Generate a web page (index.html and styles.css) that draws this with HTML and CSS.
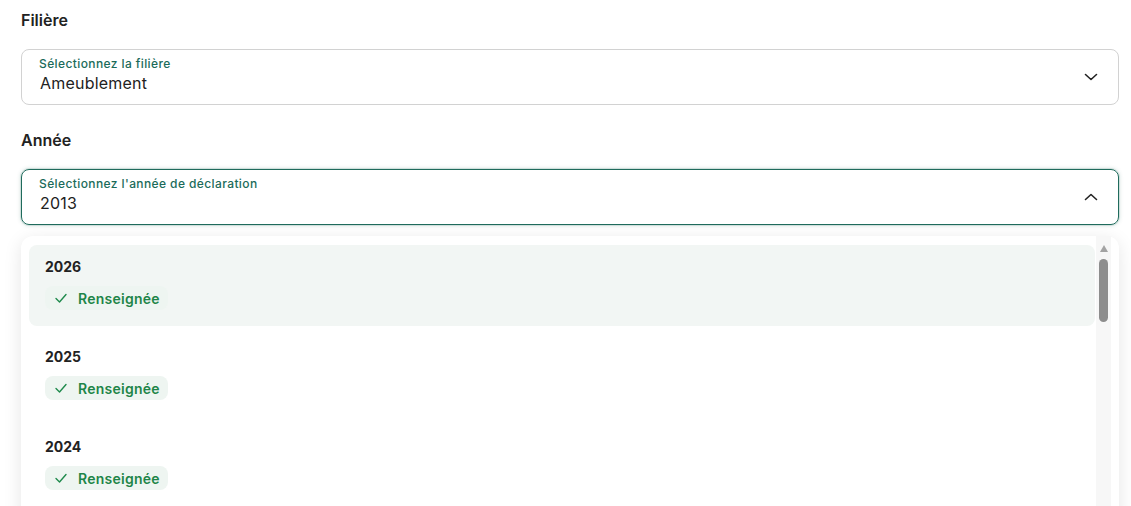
FILE: index.html
```html
<!DOCTYPE html>
<html lang="fr">
<head>
<meta charset="utf-8">
<title>Déclaration</title>
<link rel="stylesheet" href="styles.css">
</head>
<body>
<main class="form">
  <section class="field">
    <h2 class="field-title">Filière</h2>
    <div class="select">
      <div class="select-text">
        <span class="select-label">Sélectionnez la filière</span>
        <span class="select-value">Ameublement</span>
      </div>
      <svg class="chevron" width="14" height="8" viewBox="0 0 14 8"><path d="M1.5 1.5 L7 6.5 L12.5 1.5" fill="none" stroke="#222" stroke-width="1.6" stroke-linecap="round" stroke-linejoin="round"/></svg>
    </div>
  </section>
  <section class="field">
    <h2 class="field-title">Année</h2>
    <div class="select select-open">
      <div class="select-text">
        <span class="select-label">Sélectionnez l'année de déclaration</span>
        <span class="select-value">2013</span>
      </div>
      <svg class="chevron" width="14" height="8" viewBox="0 0 14 8"><path d="M1.5 6.5 L7 1.5 L12.5 6.5" fill="none" stroke="#222" stroke-width="1.6" stroke-linecap="round" stroke-linejoin="round"/></svg>
    </div>
    <div class="menu">
      <ul class="options">
        <li class="option option-active">
          <span class="year">2026</span>
          <span class="chip"><svg width="14" height="14" viewBox="0 0 14 14"><path d="M2 7.5 L5.5 11 L12 3.5" fill="none" stroke="#1f8a4c" stroke-width="1.4" stroke-linecap="round" stroke-linejoin="round"/></svg>Renseignée</span>
        </li>
        <li class="option">
          <span class="year">2025</span>
          <span class="chip"><svg width="14" height="14" viewBox="0 0 14 14"><path d="M2 7.5 L5.5 11 L12 3.5" fill="none" stroke="#1f8a4c" stroke-width="1.4" stroke-linecap="round" stroke-linejoin="round"/></svg>Renseignée</span>
        </li>
        <li class="option">
          <span class="year">2024</span>
          <span class="chip"><svg width="14" height="14" viewBox="0 0 14 14"><path d="M2 7.5 L5.5 11 L12 3.5" fill="none" stroke="#1f8a4c" stroke-width="1.4" stroke-linecap="round" stroke-linejoin="round"/></svg>Renseignée</span>
        </li>
      </ul>
      <div class="scrollbar">
        <span class="scroll-arrow"></span>
        <span class="scroll-thumb"></span>
      </div>
    </div>
  </section>
</main>
</body>
</html>
```

FILE: styles.css
```css
* { box-sizing: border-box; }
html, body { margin: 0; padding: 0; background: #fff; height: 100%; overflow: hidden; }
body {
  font-family: Inter, "Noto Sans", "Liberation Sans", sans-serif;
  color: #222;
}
.form {
  width: 1098px;
  margin-left: 21px;
  padding-top: 8px;
}
.field-title {
  margin: 0;
  font-size: 16px;
  line-height: 24px;
  font-weight: 600;
  color: #222;
}
.field + .field { margin-top: 23px; }
.select {
  margin-top: 17px;
  height: 56px;
  border: 1px solid #d2d2d2;
  border-radius: 8px;
  padding: 6px 20px 0 17px;
  display: flex;
  align-items: center;
  justify-content: space-between;
}
.select-open {
  border-color: #1f6b5c;
  box-shadow: 0 0 0 1px rgba(31,107,92,0.12), 0 0 4px rgba(31,107,92,0.25);
}
.select-text {
  display: flex;
  flex-direction: column;
  align-self: flex-start;
}
.select-label {
  font-size: 12px;
  line-height: 16px;
  font-weight: 500;
  letter-spacing: 0.4px;
  color: #1b6b5a;
}
.select-value {
  font-size: 16px;
  line-height: 22px;
  letter-spacing: 0.2px;
  padding-left: 1px;
  color: #222;
}
.chevron { margin-top: -6px; }
.menu {
  margin-top: 11px;
  height: 290px;
  background: #fff;
  border-radius: 12px;
  box-shadow: 0 4px 18px rgba(0,0,0,0.10);
  padding: 9px 8px 0 8px;
  display: flex;
}
.options {
  list-style: none;
  margin: 0;
  padding: 0;
  flex: 1;
  display: flex;
  flex-direction: column;
  gap: 9px;
}
.option {
  padding: 12px 16px 16px;
  border-radius: 8px;
  display: flex;
  flex-direction: column;
  align-items: flex-start;
  gap: 9px;
}
.option-active { background: #f2f6f4; }
.year {
  font-size: 14px;
  line-height: 20px;
  font-weight: 700;
  color: #222;
}
.chip {
  height: 24px;
  display: inline-flex;
  align-items: center;
  gap: 10px;
  padding: 0 8px 0 9px;
  border-radius: 8px;
  background: #eef5f1;
  font-size: 14px;
  font-weight: 600;
  letter-spacing: 0.25px;
  color: #1e8548;
}
.scrollbar {
  width: 15px;
  margin-left: 1px;
  margin-top: -9px;
  background: #f7f7f7;
  display: flex;
  flex-direction: column;
  align-items: center;
  padding-top: 9px;
}
.scroll-arrow {
  width: 0;
  height: 0;
  border-left: 4px solid transparent;
  border-right: 4px solid transparent;
  border-bottom: 7px solid #a3a3a3;
}
.scroll-thumb {
  margin-top: 7px;
  width: 9px;
  height: 63px;
  border-radius: 5px;
  background: #8d8d8d;
}
```
